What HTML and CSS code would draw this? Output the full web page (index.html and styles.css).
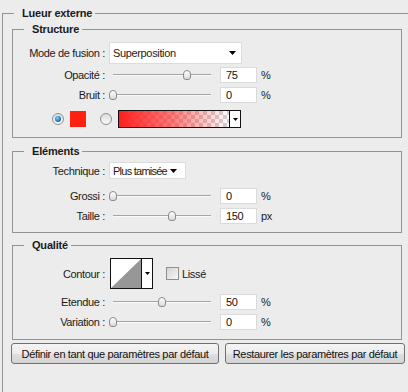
FILE: index.html
```html
<!DOCTYPE html>
<html lang="fr">
  <head>
    <meta charset="UTF-8" />
    <meta name="viewport" content="width=device-width, initial-scale=1.0" />
    <title>Lueur externe</title>
    <link rel="stylesheet" href="styles.css">
  </head>
  <body>
    <fieldset class="panel">
      <legend>Lueur externe</legend>

      <fieldset class="group structure">
        <legend>Structure</legend>
        <div class="row row-mode">
          <label class="label">Mode de fusion :</label>
          <div class="select select-mode">
            <span>Superposition</span>
            <svg class="arrow" width="7" height="4" viewBox="0 0 7 4"><polygon points="0,0 7,0 3.5,4" /></svg>
          </div>
        </div>
        <div class="row row-slider">
          <label class="label">Opacité :</label>
          <input class="slider" type="range" min="0" max="100" value="75">
          <input class="num" type="text" value="75">
          <span class="unit">%</span>
        </div>
        <div class="row row-slider">
          <label class="label">Bruit :</label>
          <input class="slider" type="range" min="0" max="100" value="0">
          <input class="num" type="text" value="0">
          <span class="unit">%</span>
        </div>
        <div class="row row-color">
          <span class="radio checked"></span>
          <span class="swatch"></span>
          <span class="radio"></span>
          <div class="gradient">
            <span class="gradient-fill"></span>
            <span class="gradient-btn">
              <svg class="arrow" width="5" height="3" viewBox="0 0 5 3"><polygon points="0,0 5,0 2.5,3" /></svg>
            </span>
          </div>
        </div>
      </fieldset>

      <fieldset class="group elements">
        <legend>Eléments</legend>
        <div class="row row-technique">
          <label class="label">Technique :</label>
          <div class="select select-technique">
            <span>Plus tamisée</span>
            <svg class="arrow" width="7" height="4" viewBox="0 0 7 4"><polygon points="0,0 7,0 3.5,4" /></svg>
          </div>
        </div>
        <div class="row row-slider first-slider">
          <label class="label">Grossi :</label>
          <input class="slider" type="range" min="0" max="100" value="0">
          <input class="num" type="text" value="0">
          <span class="unit">%</span>
        </div>
        <div class="row row-slider">
          <label class="label">Taille :</label>
          <input class="slider" type="range" min="0" max="250" value="150">
          <input class="num" type="text" value="150">
          <span class="unit">px</span>
        </div>
      </fieldset>

      <fieldset class="group quality">
        <legend>Qualité</legend>
        <div class="row row-contour">
          <label class="label">Contour :</label>
          <div class="contour">
            <svg class="contour-curve" width="30" height="29" viewBox="0 0 30 29">
              <rect width="30" height="29" fill="#fff" />
              <polygon points="0,29 30,0 30,29" fill="#979797" />
            </svg>
            <span class="contour-btn">
              <svg class="arrow" width="5" height="3" viewBox="0 0 5 3"><polygon points="0,0 5,0 2.5,3" /></svg>
            </span>
          </div>
          <span class="checkbox"></span>
          <span class="check-label">Lissé</span>
        </div>
        <div class="row row-slider first-slider">
          <label class="label">Etendue :</label>
          <input class="slider" type="range" min="0" max="100" value="50">
          <input class="num" type="text" value="50">
          <span class="unit">%</span>
        </div>
        <div class="row row-slider">
          <label class="label">Variation :</label>
          <input class="slider" type="range" min="0" max="100" value="0">
          <input class="num" type="text" value="0">
          <span class="unit">%</span>
        </div>
      </fieldset>

      <div class="actions">
        <button class="btn btn-save">Définir en tant que paramètres par défaut</button>
        <button class="btn btn-reset">Restaurer les paramètres par défaut</button>
      </div>
    </fieldset>
  </body>
</html>
```

FILE: styles.css
```css
body {
  margin: 0;
  background-color: #ececec;
  font-family: "Liberation Sans", Arial, sans-serif;
  font-size: 11px;
  letter-spacing: -0.35px;
  color: #1a1a1a;
  overflow: hidden;
}

fieldset {
  margin: 0;
  padding: 0;
  border: 1px solid #939393;
  min-width: 0;
}

legend {
  padding: 0 3px 0 8px;
  font-weight: bold;
  line-height: 14px;
  letter-spacing: -0.2px;
}

.panel {
  margin: 6px 0 0 2px;
  border-right: none;
  border-bottom: none;
  height: 386px;
  box-sizing: border-box;
}

.panel > legend {
  margin-left: 11px;
}

.group {
  width: 390px;
  margin-left: 9px;
  box-sizing: border-box;
}

.group > legend {
  margin-left: 11px;
}

.structure {
  margin-top: 2px;
  padding-bottom: 9px;
}

.elements {
  margin-top: 6px;
  padding-bottom: 6px;
}

.quality {
  margin-top: 5px;
  padding-bottom: 7px;
}

.row {
  display: flex;
  align-items: center;
  white-space: nowrap;
}

.label {
  flex: none;
  width: 92px;
  margin-right: 4px;
  text-align: right;
}

.row-mode {
  margin-top: 6px;
}

.row-slider {
  height: 20px;
}

.row-mode + .row-slider {
  margin-top: 1px;
}

.row-technique {
  margin-top: 4px;
}

.first-slider {
  margin-top: 7px;
}

.quality .first-slider {
  margin-top: 3px;
}

/* dropdowns */
.select {
  display: flex;
  align-items: center;
  justify-content: space-between;
  box-sizing: border-box;
  padding-left: 3px;
  background-color: #fff;
  border: 1px solid #dcdcdc;
}

.select-mode {
  width: 133px;
  height: 22px;
  padding-right: 5px;
}

.select-technique {
  width: 77px;
  height: 17px;
  padding-right: 8px;
}

.select-technique span {
  letter-spacing: -0.75px;
}

.arrow {
  display: block;
  flex: none;
  fill: #000;
}

/* sliders */
.slider {
  -webkit-appearance: none;
  appearance: none;
  width: 106px;
  height: 12px;
  margin: 0 5px 0 0;
  background: transparent;
}

.slider::-webkit-slider-runnable-track {
  height: 2px;
  background: linear-gradient(#a5a5a5 50%, #fafafa 50%) no-repeat 4px 0 / 98px 2px;
}

.slider::-webkit-slider-thumb {
  -webkit-appearance: none;
  box-sizing: border-box;
  width: 8px;
  height: 10px;
  margin-top: -4px;
  border: 1px solid #8a8a8a;
  border-radius: 4px 4px 3px 3px;
  background: linear-gradient(#ffffff, #d9d9d9);
}

.num {
  box-sizing: border-box;
  width: 37px;
  height: 16px;
  padding: 0 0 0 5px;
  border: 1px solid #dadada;
  background-color: #fff;
  font: inherit;
  letter-spacing: inherit;
  color: #111;
  outline: none;
}

.unit {
  margin-left: 4px;
}

/* color row */
.row-color {
  height: 18px;
  margin-top: 5px;
  padding-left: 39px;
}

.radio {
  box-sizing: border-box;
  width: 12px;
  height: 12px;
  border: 1px solid #8e8f8f;
  border-radius: 50%;
  background: linear-gradient(#dcdcdc, #fbfbfb);
  position: relative;
}

.radio.checked::after {
  content: "";
  position: absolute;
  left: 2px;
  top: 2px;
  width: 6px;
  height: 6px;
  border-radius: 50%;
  background: radial-gradient(circle at 40% 35%, #7fd3f7, #1b76b4 60%, #0b3f66);
}

.swatch {
  width: 16px;
  height: 16px;
  margin: 0 14px 0 6px;
  background-color: #ff2211;
}

.gradient {
  display: flex;
  box-sizing: border-box;
  width: 123px;
  height: 18px;
  margin-left: 6px;
  border: 1px solid #111;
}

.gradient-fill {
  flex: 1;
  background:
    linear-gradient(to right, #ff1f1f, rgba(255, 40, 40, 0.6) 50%, rgba(255, 60, 60, 0)),
    linear-gradient(45deg, #d2d2d2 25%, transparent 25%, transparent 75%, #d2d2d2 75%),
    linear-gradient(45deg, #d2d2d2 25%, #fff 25%, #fff 75%, #d2d2d2 75%);
  background-size: 100% 100%, 8px 8px, 8px 8px;
  background-position: 0 0, 0 0, 4px 4px;
}

.gradient-btn,
.contour-btn {
  display: flex;
  align-items: center;
  justify-content: center;
  width: 10px;
  border-left: 1px solid #111;
  background-color: #fff;
}

/* contour row */
.row-contour {
  margin-top: 6px;
}

.contour {
  display: flex;
  margin-left: 1px;
  border: 1px solid #111;
}

.contour-curve {
  display: block;
}

.checkbox {
  box-sizing: border-box;
  width: 13px;
  height: 13px;
  margin-left: 13px;
  border: 1px solid #8f8f8f;
  background: linear-gradient(135deg, #d5d5d5, #f7f7f7);
}

.check-label {
  margin-left: 3px;
}

/* buttons */
.actions {
  display: flex;
  gap: 6px;
  margin: 3px 0 0 8px;
}

.btn {
  height: 21px;
  padding: 0;
  border: 1px solid #707070;
  border-radius: 3px;
  background: linear-gradient(#f4f4f4, #ececec 50%, #dfdfdf 51%, #d4d4d4);
  font: inherit;
  letter-spacing: inherit;
  color: #111;
}

.btn-save {
  width: 208px;
}

.btn-reset {
  width: 180px;
}
```
